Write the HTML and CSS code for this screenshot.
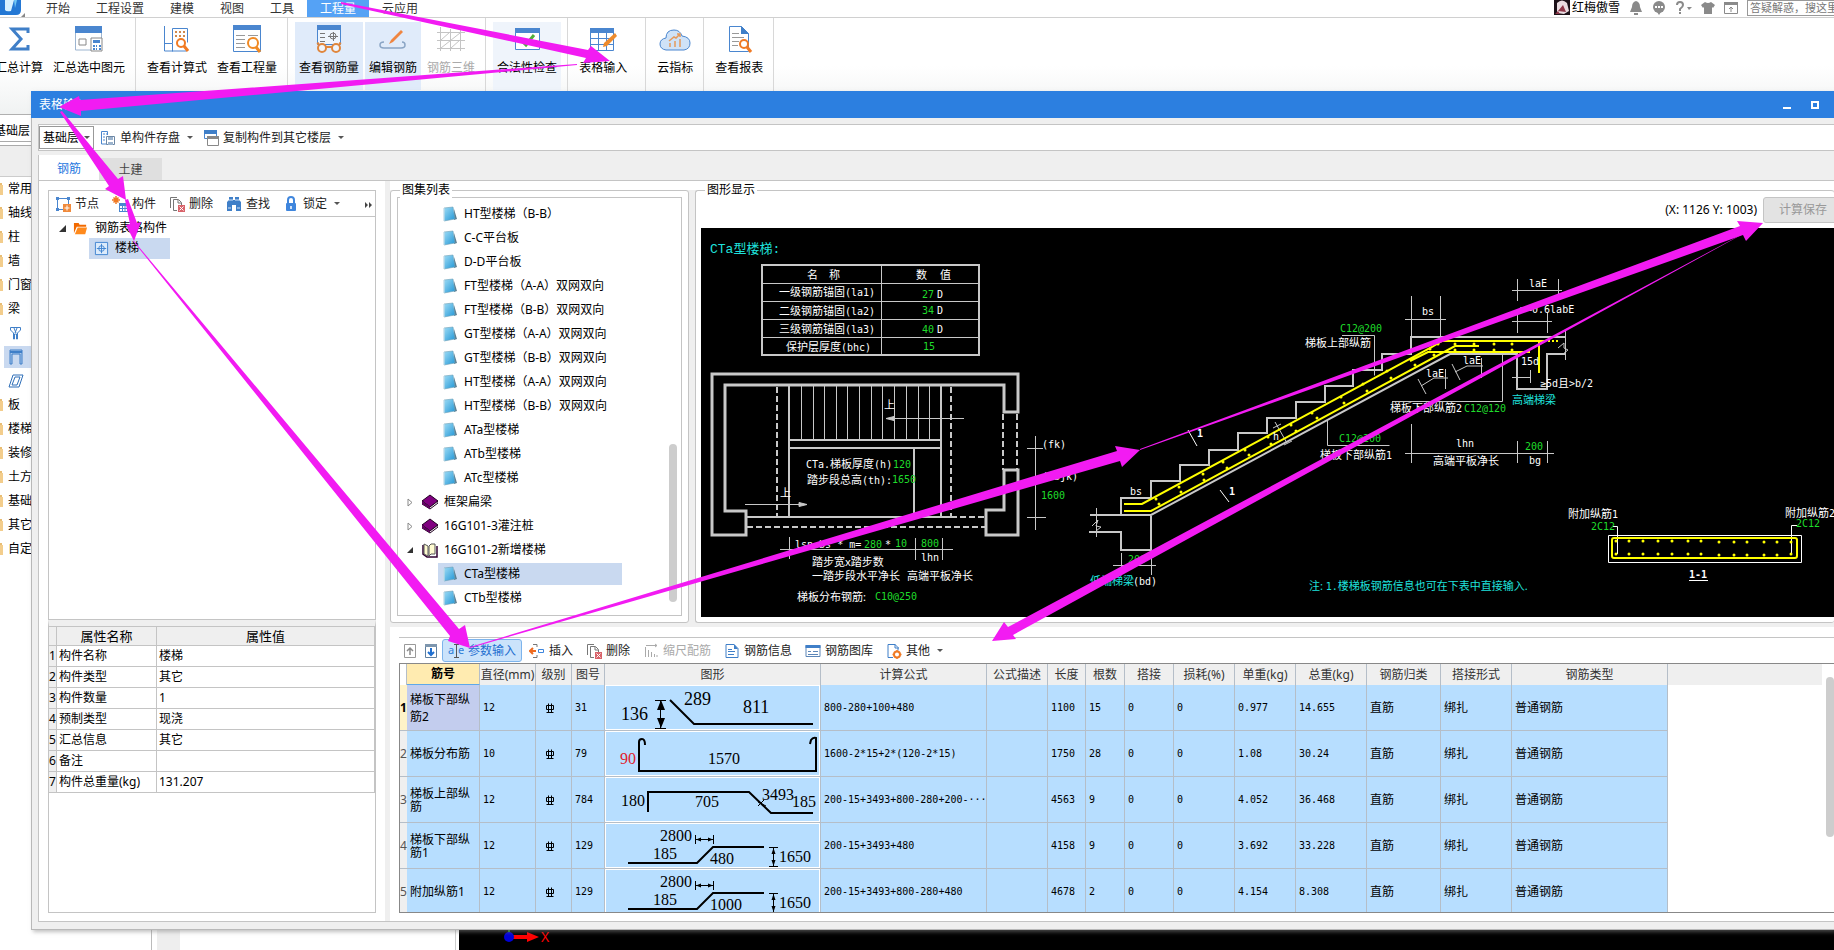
FILE: index.html
```html
<!DOCTYPE html>
<html lang="zh-CN">
<head>
  <meta charset="UTF-8" />
  <meta name="viewport" content="width=device-width, initial-scale=1.0"/>
  <title>表格输入</title>
  <link rel="stylesheet" href="styles.css">
</head>
<body>
  <!-- icon sprite -->
  <svg class="sprite" aria-hidden="true">
    <linearGradient id="pageFill" x1="0" y1="0" x2="1" y2="1"><stop offset="0" stop-color="#9fdcf5"/><stop offset="1" stop-color="#2196d6"/></linearGradient>
    <symbol id="i-page" viewBox="0 0 16 16"><path d="M12 3l3 10-3 1z" fill="#5b7f92"/><path d="M2 2l9-1 2 12-11 2z" fill="url(#pageFill)" stroke="#6f9fb5" stroke-width=".6"/><path d="M2 2v13" stroke="#d6edf7"/></symbol>
    <symbol id="i-book" viewBox="0 0 16 16"><path d="M0 7l8-6 8 6-8 6z" fill="#800080" stroke="#200020"/><path d="M0 7v3l8 5 8-6V7l-8 6z" fill="#fff" stroke="#200020"/><path d="M0 7l8 6v2l-8-5z" fill="#600060"/></symbol>
    <symbol id="i-open" viewBox="0 0 16 16"><path d="M1 3v9l4 3h10V4" fill="none" stroke="#300030" stroke-width="1.500"/><path d="M2 2l4 2v10l-4-2zM7 4l2-2h4v10H9l-2 2z" fill="#fffbd0" stroke="#555"/></symbol>
    <symbol id="i-folder" viewBox="0 0 16 16"><path d="M1 2h5l1 2h7v2H4L1 13z" fill="#f26a00"/><path d="M5 7h10l-2 7H2z" fill="#ff8a1c"/></symbol>
    <symbol id="i-comp" viewBox="0 0 16 16"><path d="M1.500 1.500h13v13h-13z" fill="#dcebfb" stroke="#3f83d0"/><path d="M8 3v10M3 8h10" stroke="#3f83d0" fill="none"/><circle cx="8" cy="8" r="3" fill="none" stroke="#3f83d0"/></symbol>
    <symbol id="i-node" viewBox="0 0 16 16"><path d="M8 13.500H2.500v-11h11V8" fill="none" stroke="#4a86cf"/><path d="M1 1h3v3H1zM12 1h3v3h-3zM1 12h3v3H1z" fill="#4a86cf"/><path d="M8 8h8v8H8z" fill="#f08a3c"/><path d="M12 9.500v5M9.500 12h5" stroke="#fff"/></symbol>
    <symbol id="i-addcomp" viewBox="0 0 16 16"><path d="M4 0v8M0 4h8M1.500 1.500l5 5M6.500 1.500l-5 5" stroke="#f07a24" stroke-width="1.500"/><path d="M7 7h9v9H7z" fill="#4a86cf"/><path d="M8 10h2v2H8zM11 10h1.500v2H11zM13.500 10H15v2h-1.500zM8 13h2v2H8zM11 13h1.500v2H11zM13.500 13H15v2h-1.500z" fill="#fff"/></symbol>
    <symbol id="i-del" viewBox="0 0 16 16"><path d="M1.500 12V1.500H8M4.500 14.500v-11h5l3 3v3M4.500 14.500H8M9 4v3h3" fill="none" stroke="#777"/><path d="M9 9h7v7H9z" fill="#d9636a"/><path d="M10.500 10.500l4 4M14.500 10.500l-4 4" stroke="#fff"/></symbol>
    <symbol id="i-find" viewBox="0 0 16 16"><path d="M3 1h4v3h2V1h4v3l2 2v9h-5V9H6v6H1V6l2-2z" fill="#3f7fc8"/><path d="M3 4h4M9 4h4M2 12h3M11 12h3" stroke="#d7e6f7"/></symbol>
    <symbol id="i-lock" viewBox="0 0 16 16"><path d="M5 8V4a3 3 0 0 1 6 0v4" fill="none" stroke="#3f86dd" stroke-width="2"/><rect x="3" y="7" width="10" height="8" rx="1" fill="#3f86dd"/><path d="M8 10v3" stroke="#fff" stroke-width="1.500"/></symbol>
    <symbol id="i-save" viewBox="0 0 16 16"><path d="M7 14H1.500V1.500h6V5" fill="none" stroke="#4a86cf"/><path d="M3 4h2M3 7h2M3 10h2M6 4h1" stroke="#4a86cf"/><path d="M6.500 6.500h8v8h-8z" fill="#fff" stroke="#6c87a5"/><path d="M8 7h5v3H8zM8 12h5v3H8z" fill="#9bb3cd"/></symbol>
    <symbol id="i-copy" viewBox="0 0 16 16"><path d="M1.500 .500h12v8h-12z" fill="#fff" stroke="#4a86cf"/><path d="M1 0h13v4H1z" fill="#3f7fc8"/><path d="M4.500 6.500h11v9h-11z" fill="#fff" stroke="#888"/><path d="M4 6h12v3H4z" fill="#888"/></symbol>
    <symbol id="i-up" viewBox="0 0 16 16"><path d="M2.500 1.500h11v13h-11z" fill="none" stroke="#999"/><path d="M8 12V5M5 8l3-3 3 3" fill="none" stroke="#8a8a8a" stroke-width="1.500"/></symbol>
    <symbol id="i-down" viewBox="0 0 16 16"><path d="M2.500 1.500h11v13h-11z" fill="none" stroke="#5f7f9f"/><path d="M2 1h12v3H2z" fill="#7d96ae"/><path d="M8 5v7M5 9l3 3 3-3" fill="none" stroke="#1f6fd0" stroke-width="2"/></symbol>
    <symbol id="i-ins" viewBox="0 0 16 16"><path d="M4 1.500h4V4M4 14.500h4V12" fill="none" stroke="#777"/><path d="M7 8H2M4 5L1 8l3 3" fill="none" stroke="#ee6a1f" stroke-width="2"/><path d="M9.500 6.500h5v3h-5z" fill="none" stroke="#3f86dd"/></symbol>
    <symbol id="i-scale" viewBox="0 0 16 16"><path d="M2.500 4v10M5.500 7v7M8.500 9v5M11.500 11v3M14 12v2M3 2.500h11M12 1l2 1.500L12 4" stroke="#aaa" fill="none"/></symbol>
    <symbol id="i-info" viewBox="0 0 16 16"><path d="M2 1.500h8l4 4v9H2z" fill="#fff" stroke="#3f7fc8"/><path d="M10 1v5h4z" fill="#3f7fc8"/><path d="M4 6.500h4M4 8.500h7M4 11.500h6" stroke="#3f7fc8"/></symbol>
    <symbol id="i-lib" viewBox="0 0 16 16"><path d="M1 2.500h14v11H1z" fill="#fff" stroke="#5c86b8"/><path d="M.500 2h15v3H.500z" fill="#3f7fc8"/><path d="M3 8.500h3M3 11.500h10M8 8.500h5" stroke="#5c86b8"/></symbol>
    <symbol id="i-other" viewBox="0 0 16 16"><path d="M7 14.500H2v-13h7l3 3v3M9 1v4h4" fill="#fff" stroke="#3f7fc8"/><circle cx="11" cy="11.500" r="3" fill="#fff" stroke="#f07a24" stroke-width="2"/><path d="M11 7v2M11 14v2M6.500 11.500h2M13.500 11.500h2" stroke="#f07a24" stroke-width="1.500"/></symbol>
    <symbol id="i-rebar" viewBox="0 0 10 12"><path d="M1.500 3.500h7v4h-7zM3.500 1.500v9M6.500 1.500v9M1.500 10.500h7" fill="none" stroke="#000"/></symbol>
    <symbol id="i-nav" viewBox="0 0 4 14"><path d="M0 1h2v12H0z" fill="#e8bd73"/><path d="M0 3h3v10H0z" fill="#f3cd8c"/></symbol>
  </svg>

  <div class="app">
    <header class="menubar">
      <div class="logo">
        <svg width="21" height="15" viewBox="0 0 21 15"><path d="M0 0h21v10q0 5-5 5H0z" fill="#2478d4"/><path d="M5 0h9l-3 11q-5 1-6-1z" fill="#d8f1ff"/><path d="M14 0h3l-2 8z" fill="#6fc6f5"/></svg>
        <svg width="4" height="4" viewBox="0 0 4 4"><path d="M4 0v4H0z" fill="#888"/></svg>
      </div>
      <nav class="menus">
        <a href="#">开始</a><a href="#">工程设置</a><a href="#">建模</a><a href="#">视图</a><a href="#">工具</a><a href="#" class="active">工程量</a><a href="#">云应用</a>
      </nav>
      <div class="account">
        <svg class="avatar" width="16" height="15" viewBox="0 0 16 15"><path d="M0 0h16v15H0z" fill="#1c1118"/><path d="M3 3q5-5 10 0l2 8-5 3-7-1z" fill="#e9dbe0"/><path d="M4 11l5-6 3 7zM1 14l3-3 2 3z" fill="#8e3648"/></svg>
        <span>红梅傲雪</span>
        <svg width="14" height="14" viewBox="0 0 14 14"><path d="M7 0q4 1 4 6l2 5H1l2-5q0-5 4-6zM5 12h4v2H5z" fill="#8a8a8a"/></svg>
        <svg width="14" height="14" viewBox="0 0 14 14"><circle cx="7" cy="6" r="6" fill="#8a8a8a"/><path d="M5 11l2 3 2-3z" fill="#8a8a8a"/><path d="M3 6h2M6 6h2M9 6h2" stroke="#fff" stroke-width="2"/></svg>
        <svg width="17" height="14" viewBox="0 0 17 14"><path d="M2 4q0-3 3-3t3 3q0 2-3 4v2M5 11v2" fill="none" stroke="#8a8a8a" stroke-width="2"/><path d="M12 6h5l-3 3z" fill="#8a8a8a"/></svg>
        <svg width="14" height="14" viewBox="0 0 14 14"><path d="M4 1q3 2 6 0l4 3-2 3-1-1v7H3V6L2 7 0 4z" fill="#8a8a8a"/></svg>
        <svg width="14" height="14" viewBox="0 0 14 14"><path d="M.500 1.500h13v11H.500z" fill="none" stroke="#8a8a8a"/><path d="M0 1h14v3H0z" fill="#8a8a8a"/><path d="M7 11V6M5 8l2-2 2 2" fill="none" stroke="#8a8a8a"/></svg>
        <input type="text" class="search" aria-label="搜索" placeholder="答疑解惑，搜这里">
      </div>
    </header>

    <div class="ribbon">
      <div class="group first">
        <button class="tool"><svg width="30" height="30" viewBox="0 0 30 30"><path d="M24 9V5H8l9 10-9 10h16v-4" fill="none" stroke="#3f7fc8" stroke-width="3"/></svg>汇总计算</button>
        <button class="tool"><svg width="30" height="30" viewBox="0 0 30 30"><path d="M1.500 3h26v23h-26z" fill="#fff" stroke="#9db5d0"/><path d="M1 2h27v7H1z" fill="#4a86cf"/><path d="M5 15h7v6H5z" fill="none" stroke="#888"/><path d="M17 14h11v13H17z" fill="#fff" stroke="#888"/><path d="M19 16h7v3h-7zM19 21h2v2h-2zM22 21h1v2h-1zM25 21h2v2h-2zM19 24h2v2h-2zM22 24h1v2h-1zM25 24h2v2h-2z" fill="#4a86cf"/></svg>汇总选中图元</button>
      </div>
      <div class="group">
        <button class="tool"><svg width="30" height="30" viewBox="0 0 30 30"><path d="M2.500 2v25h22M2.500 19.500h8v8M10.500 19V4.500h15v14" fill="none" stroke="#4a86cf"/><path d="M13 7h2v2h-2zM17 7h2v2h-2zM21 7h2v2h-2zM13 11h2v2h-2zM17 11h2v2h-2zM21 11h2v2h-2z" fill="#d0894d"/><circle cx="19" cy="19" r="4" fill="#fff" stroke="#f07a24" stroke-width="2"/><path d="M22 22l4 5" stroke="#f07a24" stroke-width="3"/></svg>查看计算式</button>
        <button class="tool"><svg width="30" height="30" viewBox="0 0 30 30"><path d="M1.500 1.500h27v26h-27z" fill="#fff" stroke="#4a86cf"/><path d="M1 1h28v5H1z" fill="#4a86cf"/><path d="M4 11.500h9M4 15.500h9M4 19.500h9M4 23.500h9M16 11.500h10M16 15.500h4" stroke="#999"/><circle cx="21" cy="19" r="5" fill="#fff" stroke="#f08a24" stroke-width="2"/><path d="M24 23l4 5" stroke="#f08a24" stroke-width="3"/></svg>查看工程量</button>
      </div>
      <div class="group">
        <button class="tool on"><svg width="30" height="30" viewBox="0 0 30 30"><path d="M3.500 1.500h23v19h-23z" fill="#eef5fd" stroke="#4a86cf"/><path d="M3 1h24v5H3z" fill="#4a86cf"/><path d="M6 9.500h5M6 13.500h5M6 17.500h5M14 12.500h10M19.500 8v9" stroke="#777"/><circle cx="19" cy="12" r="3" fill="none" stroke="#777"/><circle cx="8" cy="24" r="4" fill="#eef5fd" stroke="#e0863c" stroke-width="2"/><circle cx="22" cy="24" r="4" fill="#eef5fd" stroke="#e0863c" stroke-width="2"/><path d="M12 23h6M3 20l2-1M27 20l-2-1" stroke="#e0863c" stroke-width="2"/></svg>查看钢筋量</button>
        <button class="tool on"><svg width="30" height="30" viewBox="0 0 30 30"><path d="M6 18q-4 0-4 3t4 3h17q4 0 4-3t-3-3" fill="none" stroke="#8aa5c5" stroke-width="1.500"/><path d="M11 20l2-4L23 6l2 2-10 10z" fill="#ef8540"/></svg>编辑钢筋</button>
        <button class="tool" disabled><svg width="30" height="30" viewBox="0 0 30 30"><path d="M4.500 3v24M14.500 5v22M24.500 3v24M1 8.500h28M1 16.500h28M1 24.500h28M5 24L24 9M5 16l9-8M15 24l9-8" fill="none" stroke="#c4c4c4"/></svg>钢筋三维</button>
      </div>
      <div class="group">
        <button class="tool soft"><svg width="30" height="30" viewBox="0 0 30 30"><path d="M3.500 4.500h24v21h-24z" fill="#fff" stroke="#4a86cf"/><path d="M3 4h25v5H3z" fill="#4a86cf"/><path d="M10 17l4 4 8-10" fill="none" stroke="#4fae3c" stroke-width="3"/></svg>合法性检查</button>
      </div>
      <div class="group wide">
        <button class="tool"><svg width="30" height="30" viewBox="0 0 30 30"><path d="M2.500 4.500h23v22h-23zM10.500 8v18M18.500 8v18M2 14.500h23M2 20.500h23" fill="#fff" stroke="#4a86cf"/><path d="M2 4h24v5H2z" fill="#4a86cf"/><path d="M15 23l1-4L27 9l2 3-10 10z" fill="#ee8b2c"/></svg>表格输入</button>
      </div>
      <div class="group">
        <button class="tool"><svg width="32" height="30" viewBox="0 0 32 30"><path d="M7 26q-6-1-6-6 0-5 6-6 0-8 8-8 6 0 8 6 8 1 8 7 0 6-6 7z" fill="#cfe2f7" stroke="#4a86cf"/><path d="M11 23v-4M16 23v-6M21 23v-8M10 17l5-4 2 1 4-4M18 10h3v3" fill="none" stroke="#e59a5c" stroke-width="1.500"/></svg>云指标</button>
      </div>
      <div class="group">
        <button class="tool"><svg width="30" height="30" viewBox="0 0 30 30"><path d="M5.500 2.500h12l7 7v18h-19z" fill="#fff" stroke="#4a86cf"/><path d="M17 2v8h8z" fill="#3f7fc8"/><path d="M8 9.500h7M8 13.500h12M8 17.500h7M8 21.500h6" stroke="#999"/><circle cx="20" cy="20" r="4" fill="#fff" stroke="#f07a24" stroke-width="2"/><path d="M23 23l4 5" stroke="#f07a24" stroke-width="3"/></svg>查看报表</button>
      </div>
    </div>

    <div class="workspace">
      <aside class="modules">
        <div class="floor">基础层</div>
        <div class="modhead"></div>
        <ul>
          <li><svg width="4" height="14"><use href="#i-nav"/></svg>常用类型</li>
          <li><svg width="4" height="14"><use href="#i-nav"/></svg>轴线</li>
          <li><svg width="4" height="14"><use href="#i-nav"/></svg>柱</li>
          <li><svg width="4" height="14"><use href="#i-nav"/></svg>墙</li>
          <li><svg width="4" height="14"><use href="#i-nav"/></svg>门窗洞</li>
          <li><svg width="4" height="14"><use href="#i-nav"/></svg>梁</li>
          <li class="sub"><svg width="16" height="16" viewBox="0 0 16 16"><path d="M2.500 2.500h10V5L9.500 8v6h-1V9h-2v5h-1V8l-3-3zM6 3l2 5M9 3l-2 5" fill="none" stroke="#3f7fc8"/></svg></li>
          <li class="sub sel"><svg width="16" height="16" viewBox="0 0 16 16"><path d="M2 1h12v14h-2V5H4v10H2z" fill="#a9c7ea" stroke="#3f7fc8"/><path d="M2 2h12v2H2z" fill="#3f7fc8"/></svg></li>
          <li class="sub"><svg width="16" height="16" viewBox="0 0 16 16"><path d="M5 2h10l-4 12H1zM7 4h5L9 12H4z" fill="none" stroke="#2f6fb8"/></svg></li>
          <li><svg width="4" height="14"><use href="#i-nav"/></svg>板</li>
          <li><svg width="4" height="14"><use href="#i-nav"/></svg>楼梯</li>
          <li><svg width="4" height="14"><use href="#i-nav"/></svg>装修</li>
          <li><svg width="4" height="14"><use href="#i-nav"/></svg>土方</li>
          <li><svg width="4" height="14"><use href="#i-nav"/></svg>基础</li>
          <li><svg width="4" height="14"><use href="#i-nav"/></svg>其它</li>
          <li><svg width="4" height="14"><use href="#i-nav"/></svg>自定义</li>
        </ul>
      </aside>
      <div class="rail"></div>
      <div class="props-back"></div>
      <div class="model">
        <svg width="100" height="20" viewBox="0 0 100 20"><path d="M50 0v4" stroke="#1c7a1c" stroke-width="2"/><path d="M52 7h18" stroke="#f00" stroke-width="4"/><path d="M68 2l12 5-12 5z" fill="#f00"/><circle cx="50" cy="7" r="5" fill="#0000d8"/><text x="82" y="12" class="axis">X</text></svg>
      </div>
    </div>
  </div>

  <section class="dialog">
    <div class="titlebar">
      <h1>表格输入</h1>
      <button aria-label="最小化"><svg width="8" height="8"><path d="M0 6h8v2H0z" fill="#fff"/></svg></button>
      <button aria-label="最大化"><svg width="8" height="8"><path d="M1 1h6v6H1zM0 1h8" fill="none" stroke="#fff" stroke-width="2"/></svg></button>
    </div>
    <div class="frame">
      <div class="topbar">
        <span class="floorpick"><select aria-label="楼层"><option>基础层</option></select></span>
        <button class="btn"><svg><use href="#i-save"/></svg>单构件存盘<i class="caret"></i></button>
        <button class="btn"><svg><use href="#i-copy"/></svg>复制构件到其它楼层<i class="caret"></i></button>
      </div>
      <div class="tabs"><button class="tab active">钢筋</button><button class="tab">土建</button></div>

      <div class="page">
        <div class="left">
          <div class="bar">
            <button class="btn"><svg><use href="#i-node"/></svg>节点</button>
            <button class="btn"><svg><use href="#i-addcomp"/></svg>构件</button>
            <button class="btn"><svg><use href="#i-del"/></svg>删除</button>
            <button class="btn"><svg><use href="#i-find"/></svg>查找</button>
            <button class="btn"><svg><use href="#i-lock"/></svg>锁定<i class="caret"></i></button>
            <button class="more" aria-label="更多"><svg width="8" height="6" viewBox="0 0 8 6"><path d="M0 0l3 3-3 3zM4 0l3 3-3 3z" fill="#444"/></svg></button>
          </div>
          <ul class="comptree">
            <li><svg class="arr" width="7" height="7"><path d="M7 0v7H0z" fill="#333"/></svg><svg><use href="#i-folder"/></svg>钢筋表格构件</li>
            <li class="child"><span class="sel"><svg><use href="#i-comp"/></svg>楼梯</span></li>
          </ul>
          <div class="attrs">
            <table>
              <colgroup><col class="n"><col class="k"><col></colgroup>
              <thead><tr><th></th><th>属性名称</th><th>属性值</th></tr></thead>
              <tbody>
                <tr><th>1</th><td>构件名称</td><td>楼梯</td></tr>
                <tr><th>2</th><td>构件类型</td><td>其它</td></tr>
                <tr><th>3</th><td>构件数量</td><td>1</td></tr>
                <tr><th>4</th><td>预制类型</td><td>现浇</td></tr>
                <tr><th>5</th><td>汇总信息</td><td>其它</td></tr>
                <tr><th>6</th><td>备注</td><td></td></tr>
                <tr><th>7</th><td>构件总重量(kg)</td><td>131.207</td></tr>
              </tbody>
            </table>
          </div>
        </div>

        <div class="right">
          <div class="upper">
            <div class="box atlas">
              <h2>图集列表</h2>
              <ul>
                <li class="leaf"><svg><use href="#i-page"/></svg>HT型楼梯（B-B）</li>
                <li class="leaf"><svg><use href="#i-page"/></svg>C-C平台板</li>
                <li class="leaf"><svg><use href="#i-page"/></svg>D-D平台板</li>
                <li class="leaf"><svg><use href="#i-page"/></svg>FT型楼梯（A-A）双网双向</li>
                <li class="leaf"><svg><use href="#i-page"/></svg>FT型楼梯（B-B）双网双向</li>
                <li class="leaf"><svg><use href="#i-page"/></svg>GT型楼梯（A-A）双网双向</li>
                <li class="leaf"><svg><use href="#i-page"/></svg>GT型楼梯（B-B）双网双向</li>
                <li class="leaf"><svg><use href="#i-page"/></svg>HT型楼梯（A-A）双网双向</li>
                <li class="leaf"><svg><use href="#i-page"/></svg>HT型楼梯（B-B）双网双向</li>
                <li class="leaf"><svg><use href="#i-page"/></svg>ATa型楼梯</li>
                <li class="leaf"><svg><use href="#i-page"/></svg>ATb型楼梯</li>
                <li class="leaf"><svg><use href="#i-page"/></svg>ATc型楼梯</li>
                <li><svg class="arr" width="7" height="9"><path d="M1 1l4 3.500L1 8z" fill="#fff" stroke="#888"/></svg><svg><use href="#i-book"/></svg>框架扁梁</li>
                <li><svg class="arr" width="7" height="9"><path d="M1 1l4 3.500L1 8z" fill="#fff" stroke="#888"/></svg><svg><use href="#i-book"/></svg>16G101-3灌注桩</li>
                <li><svg class="arr" width="7" height="9"><path d="M6 1v6H0z" fill="#333"/></svg><svg><use href="#i-open"/></svg>16G101-2新增楼梯</li>
                <li class="leaf sel"><svg><use href="#i-page"/></svg>CTa型楼梯</li>
                <li class="leaf"><svg><use href="#i-page"/></svg>CTb型楼梯</li>
              </ul>
              <span class="thumb"></span>
            </div>

            <div class="box drawing">
              <h2>图形显示</h2>
              <div class="coords"><span>(X: 1126 Y: 1003)</span><button disabled>计算保存</button></div>
              <svg class="cad" viewBox="701 228 1133 389" preserveAspectRatio="xMinYMin slice">
                <text class="c big" x="710" y="253">CTa型楼梯:</text>
                <!-- anchorage table -->
                <g class="ln">
                  <path class="w2" d="M762 265h217v90H762z"/>
                  <path d="M881.500 265v90M762 283.500h217M762 301.500h217M762 319.500h217M762 337.500h217"/>
                </g>
                <text x="807" y="279">名</text><text x="829" y="279">称</text><text x="916" y="279">数</text><text x="940" y="279">值</text>
                <text x="779" y="296">一级钢筋锚固<tspan class="m">(la1)</tspan></text>
                <text x="779" y="315">二级钢筋锚固<tspan class="m">(la2)</tspan></text>
                <text x="779" y="333">三级钢筋锚固<tspan class="m">(la3)</tspan></text>
                <text x="786" y="351">保护层厚度<tspan class="m">(bhc)</tspan></text>
                <text class="m g" x="922" y="298">27</text><text class="m" x="937" y="298">D</text>
                <text class="m g" x="922" y="314">34</text><text class="m" x="937" y="314">D</text>
                <text class="m g" x="922" y="333">40</text><text class="m" x="937" y="333">D</text>
                <text class="m g" x="923" y="350">15</text>

                <!-- plan -->
                <g class="ln">
                  <path class="w3" d="M1018 412v-38H712v161h34v-24h-21V385h279v27zM1004 470h14v65h-32v-25h18z"/>
                  <path class="w2" d="M789 385v131M941 385v131M789 440h152M789 448h152M914 448v68M747 517h204"/>
                  <path class="w2 dash" d="M777 387v129M951 387v129M1003 414v56M1017 414v56M951 517h34M747 527h238"/>
                  <path d="M801.500 386v54M813.500 386v54M824.500 386v54M836.500 386v54M847.500 386v54M859.500 386v54M871.500 386v54M882.500 386v54M894.500 386v54M906.500 386v54M918.500 386v54M929.500 386v54"/>
                  <path d="M886 418.500h78M745 504.500h62M1035.500 436v94M1027 448.500h16M1027 517.500h19M780 549.500h173M789.500 537v22M915.500 538v22M942.500 538v22"/>
                  <path class="solid" d="M886 418.500l8-2v4zM807 504.500l-8-2v4z"/>
                </g>
                <text x="884" y="409">上</text><text x="780" y="497">上</text>
                <text x="806" y="468"><tspan class="m">CTa.</tspan>梯板厚度<tspan class="m">(h)</tspan></text><text class="m g" x="893" y="468">120</text>
                <text x="807" y="484">踏步段总高<tspan class="m">(th):</tspan></text><text class="m g" x="892" y="483">1650</text>
                <text class="m" x="1042" y="448">(fk)</text><text class="m" x="1042" y="480">(tbjk)</text><text class="m g" x="1041" y="499">1600</text>
                <text class="m" x="795" y="548">lsn=bs * m=</text><text class="m g" x="864" y="548">280</text><text class="m" x="885" y="548">*</text><text class="m g" x="895" y="547">10</text>
                <text class="m g" x="921" y="547">800</text><text class="m" x="921" y="561">lhn</text>
                <text x="812" y="566">踏步宽x踏步数</text><text x="812" y="580">一踏步段水平净长</text><text x="907" y="580">高端平板净长</text>
                <text x="797" y="601">梯板分布钢筋:</text><text class="m g" x="875" y="600">C10@250</text>

                <!-- flight section -->
                <g class="ln">
                  <path class="w2" d="M1121 515v-17h30v-17h29v-16h29v-15h29v-17h29v-15h29v-16h29v-16h28v-16h29v-16h29v-17h154M1090 515h61L1450 354h67v35h30v-35h18M1089 532h32v18h30v-35"/>
                  <path d="M1096.500 508v29M1092 526l6-6-2 6 5 1-5 4M1565.500 330v30M1558 348l6-5v5l4 2-5 4"/>
                  <path d="M1342 335.500h32.500v40M1405 319.500h41M1411.500 296v41M1440.500 296v41"/>
                  <path d="M1327.500 421v24.500h62M1418 379l8 15M1421 386l13-8h14M1445.500 369v20M1452 364l8 16M1455 372l12-6h16M1481.500 358v20"/>
                  <path d="M1392 401.500h110.500V354M1405 453.500h149M1411.500 424v39M1517.500 441v22M1547.500 441v22"/>
                  <path d="M1512 290.500h50M1517.500 279v22M1558.500 279v17M1512 321.500h40M1517.500 311v22M1547.500 312v21M1512 377.500h19M1530.500 370v13"/>
                  <path d="M1113 565.500h43M1121.500 553v17M1151.500 550v25M1275 422l12 21M1273 428l8-4M1284 445l8-4"/>
                </g>
                <path class="bar2" d="M1124 504h18L1432 347l10-6h102M1539 341v32M1124 511h27L1455 346h24M1410 361l18-9h102"/>
                <path class="bar2 fine" d="M1544 341h15"/>
                <path class="dots" d="M1156 499h0M1179 487h0M1203 474h0M1223 462h0M1245 450h0M1268 437h0M1291 425h0M1312 413h0M1341 397h0M1363 384h0M1387 371h0M1430 349h0M1438 344h0M1159 504h0M1181 492h0M1204 480h0M1227 468h0M1249 455h0M1271 444h0M1296 431h0M1317 418h0M1344 403h0M1367 391h0M1391 378h0M1415 365h0M1434 355h0M1455 344h0M1455 350h0M1474 344h0M1474 350h0M1494 344h0M1494 350h0M1512 344h0M1512 350h0"/>
                <path class="mark" d="M1188 430l9 16M1220 490l9 12"/>
                <text class="m b" x="1197" y="437">1</text><text class="m b" x="1229" y="495">1</text>
                <text class="m" x="1130" y="495">bs</text><text class="m" x="1422" y="315">bs</text><text class="m" x="1273" y="440">h</text>
                <text class="m g" x="1340" y="332">C12@200</text><text x="1305" y="347">梯板上部纵筋</text>
                <text class="m g" x="1339" y="442">C12@200</text><text x="1320" y="459">梯板下部纵筋<tspan class="m">1</tspan></text>
                <text class="m" x="1426" y="377">laE</text><text class="m" x="1463" y="364">laE</text>
                <text x="1390" y="412">梯板下部纵筋<tspan class="m">2</tspan></text><text class="m g" x="1464" y="412">C12@120</text>
                <text class="m" x="1456" y="447">lhn</text><text x="1433" y="465">高端平板净长</text><text class="m g" x="1525" y="450">200</text><text class="m" x="1529" y="464">bg</text>
                <text class="m" x="1529" y="287">laE</text><text class="m" x="1520" y="313">&gt;=0.6labE</text><text class="m" x="1521" y="365">15d</text>
                <text x="1540" y="387"><tspan class="m">≥5d</tspan>且<tspan class="m">&gt;b/2</tspan></text><text class="c" x="1512" y="404">高端梯梁</text>
                <text class="m g" x="1128" y="563">200</text><text class="c" x="1090" y="585">低端梯梁</text><text class="m" x="1133" y="585">(bd)</text>
                <text class="c" x="1309" y="590">注: <tspan class="m">1.</tspan>楼梯板钢筋信息也可在下表中直接输入.</text>

                <!-- 1-1 -->
                <path class="mark" d="M1608.500 535.500h193v27h-193zM1613 526.500h4.500V554M1797 525.500h-5.500V554M1689 580.500h19"/>
                <rect class="bar2" x="1612" y="538" width="185" height="20" rx="2"/>
                <path class="dots" d="M1616 541h0M1629 541h0M1643 541h0M1658 541h0M1672 541h0M1688 541h0M1701 541h0M1719 542h0M1734 542h0M1747 542h0M1764 542h0M1777 542h0M1791 542h0M1616 554h0M1629 554h0M1643 554h0M1658 554h0M1672 554h0M1688 554h0M1701 554h0M1719 555h0M1734 555h0M1747 555h0M1764 555h0M1777 555h0M1791 554h0"/>
                <text x="1568" y="518">附加纵筋<tspan class="m">1</tspan></text><text class="m g" x="1591" y="530">2C12</text>
                <text x="1785" y="517">附加纵筋<tspan class="m">2</tspan></text><text class="m g" x="1796" y="527">2C12</text>
                <text class="m b" x="1689" y="578">1-1</text>
              </svg>
            </div>
          </div>

          <div class="lower">
            <div class="bar">
              <button class="btn mini" aria-label="上移"><svg><use href="#i-up"/></svg></button>
              <button class="btn mini" aria-label="下移"><svg><use href="#i-down"/></svg></button>
              <button class="btn on"><svg viewBox="0 0 16 16"><path d="M8.500 2v12M6 1.500h5M6 14.500h5" stroke="#555" fill="none"/><text x="0" y="11">a</text><text x="10" y="11">e</text></svg>参数输入</button>
              <button class="btn"><svg><use href="#i-ins"/></svg>插入</button>
              <button class="btn"><svg><use href="#i-del"/></svg>删除</button>
              <button class="btn" disabled><svg><use href="#i-scale"/></svg>缩尺配筋</button>
              <button class="btn"><svg><use href="#i-info"/></svg>钢筋信息</button>
              <button class="btn"><svg><use href="#i-lib"/></svg>钢筋图库</button>
              <button class="btn"><svg><use href="#i-other"/></svg>其他<i class="caret"></i></button>
            </div>
            <div class="gridwrap">
              <table class="rebars">
                <colgroup><col class="c7"><col class="c73"><col class="c56"><col class="c36"><col class="c33"><col class="c216"><col class="c166"><col class="c61"><col class="c38"><col class="c39"><col class="c49"><col class="c61"><col class="c61"><col class="c71"><col class="c74"><col class="c71"><col class="c156"><col></colgroup>
                <thead>
                  <tr><th class="corner"></th><th class="cur">筋号</th><th>直径(mm)</th><th>级别</th><th>图号</th><th>图形</th><th>计算公式</th><th>公式描述</th><th>长度</th><th>根数</th><th>搭接</th><th>损耗(%)</th><th>单重(kg)</th><th>总重(kg)</th><th>钢筋归类</th><th>搭接形式</th><th>钢筋类型</th><th class="rest"></th></tr>
                </thead>
                <tbody>
                  <tr>
                    <th class="cur">1</th><td class="name cur">梯板下部纵筋2</td><td class="num">12</td><td class="lv"><svg width="10" height="12"><use href="#i-rebar"/></svg></td><td class="num">31</td>
                    <td class="fig"><svg viewBox="0 0 213 43"><path d="M64 14l24 24h119"/><path class="thin" d="M49 14.500h11M49 42.500h11M54.500 14v28"/><path class="tip" d="M55 14l4 10h-8zM55 42l4-10h-8z"/><text x="15" y="34">136</text><text x="78" y="19">289</text><text x="137" y="27">811</text></svg></td>
                    <td class="num">800-280+100+480</td><td></td><td class="num">1100</td><td class="num">15</td><td class="num">0</td><td class="num">0</td><td class="num">0.977</td><td class="num">14.655</td><td>直筋</td><td>绑扎</td><td>普通钢筋</td><td class="rest"></td>
                  </tr>
                  <tr>
                    <th>2</th><td class="name">梯板分布筋</td><td class="num">10</td><td class="lv"><svg width="10" height="12"><use href="#i-rebar"/></svg></td><td class="num">79</td>
                    <td class="fig"><svg viewBox="0 0 213 43"><path d="M39 13q0-6-3-6t-3 3v29h177V6q-3-1-5 2l-1 4"/><text class="s red" x="14" y="32">90</text><text class="s" x="102" y="32">1570</text></svg></td>
                    <td class="num">1600-2*15+2*(120-2*15)</td><td></td><td class="num">1750</td><td class="num">28</td><td class="num">0</td><td class="num">0</td><td class="num">1.08</td><td class="num">30.24</td><td>直筋</td><td>绑扎</td><td>普通钢筋</td><td class="rest"></td>
                  </tr>
                  <tr>
                    <th>3</th><td class="name">梯板上部纵筋</td><td class="num">12</td><td class="lv"><svg width="10" height="12"><use href="#i-rebar"/></svg></td><td class="num">784</td>
                    <td class="fig"><svg viewBox="0 0 213 43"><path d="M42 34V14h101l22 21h42"/><path class="thin" d="M152 28l6-6M152 24l8 4"/><text class="s" x="15" y="28">180</text><text class="s" x="89" y="29">705</text><text class="s" x="156" y="22">3493</text><text class="s" x="186" y="29">185</text></svg></td>
                    <td class="num">200-15+3493+800-280+200-···</td><td></td><td class="num">4563</td><td class="num">9</td><td class="num">0</td><td class="num">0</td><td class="num">4.052</td><td class="num">36.468</td><td>直筋</td><td>绑扎</td><td>普通钢筋</td><td class="rest"></td>
                  </tr>
                  <tr>
                    <th>4</th><td class="name">梯板下部纵筋1</td><td class="num">12</td><td class="lv"><svg width="10" height="12"><use href="#i-rebar"/></svg></td><td class="num">129</td>
                    <td class="fig"><svg viewBox="0 0 213 43"><path d="M22 39h69l16-16h51"/><path class="thin" d="M89.500 11v9M107.500 11v9M90 15.500h17M163 23.500h9M163 42.500h9M167.500 23v20"/><path class="tip" d="M90 15.500l5-2v4zM107 15.500l-5-2v4zM167.500 24l2 6h-4zM167.500 42l2-6h-4z"/><text class="s" x="54" y="17">2800</text><text class="s" x="47" y="35">185</text><text class="s" x="104" y="40">480</text><text class="s" x="173" y="38">1650</text></svg></td>
                    <td class="num">200-15+3493+480</td><td></td><td class="num">4158</td><td class="num">9</td><td class="num">0</td><td class="num">0</td><td class="num">3.692</td><td class="num">33.228</td><td>直筋</td><td>绑扎</td><td>普通钢筋</td><td class="rest"></td>
                  </tr>
                  <tr>
                    <th>5</th><td class="name">附加纵筋1</td><td class="num">12</td><td class="lv"><svg width="10" height="12"><use href="#i-rebar"/></svg></td><td class="num">129</td>
                    <td class="fig"><svg viewBox="0 0 213 43"><path d="M22 39h69l16-16h51"/><path class="thin" d="M89.500 11v9M107.500 11v9M90 15.500h17M163 23.500h9M163 42.500h9M167.500 23v20"/><path class="tip" d="M90 15.500l5-2v4zM107 15.500l-5-2v4zM167.500 24l2 6h-4zM167.500 42l2-6h-4z"/><text class="s" x="54" y="17">2800</text><text class="s" x="47" y="35">185</text><text class="s" x="104" y="40">1000</text><text class="s" x="173" y="38">1650</text></svg></td>
                    <td class="num">200-15+3493+800-280+480</td><td></td><td class="num">4678</td><td class="num">2</td><td class="num">0</td><td class="num">0</td><td class="num">4.154</td><td class="num">8.308</td><td>直筋</td><td>绑扎</td><td>普通钢筋</td><td class="rest"></td>
                  </tr>
                </tbody>
              </table>
              <span class="thumb"></span>
            </div>
          </div>
        </div>
      </div>
    </div>
  </section>

  <!-- step arrows drawn over everything -->
  <svg class="arrows" viewBox="0 0 1834 950" preserveAspectRatio="xMinYMin slice" aria-hidden="true">
    <path d="M341 2L588 50l3-4 19 15-27 2 3-5L341 4z"/>
    <path d="M577 64L80 100l-1-4-20 11 22 9v-5L577 65z"/>
    <path d="M62 111L118 179l5-3 3 24-21-11 4-3L60 112z"/>
    <path d="M125 200l3-1 9 24 4-1-7 19-8-16 4-1z"/>
    <path d="M134 241L459 629l6-4 5 23-22-7 2-5L133 241z"/>
    <path d="M470 647L1117 451l-2-5 25 4-18 17-2-6L470 648z"/>
    <path d="M1140 449L1740 226l-3-5 26 2-17 18-3-6L1140 450z"/>
    <path d="M1763 223L1008 627l-4-5-12 19 24-2-3-4z"/>
  </svg>
</body>
</html>
```
FILE: styles.css
```css
* { box-sizing: border-box; }
html, body { height: 100%; }
body {
  margin: 0;
  position: relative;
  overflow: hidden;
  background: #fff;
  color: #000;
  font: 12px/16px "Noto Sans", "Noto Sans CJK SC", sans-serif;
}
button, input, select { font: inherit; color: inherit; }
button { background: none; border: none; padding: 0; white-space: nowrap; }
ul { list-style: none; margin: 0; padding: 0; }
h1, h2 { margin: 0; font-size: 12px; font-weight: normal; }
svg { flex: none; }
.sprite { position: absolute; width: 0; height: 0; }

/* main window */
.app { height: 100%; display: flex; flex-direction: column; }
.menubar {
  display: flex;
  height: 18px;
  border-bottom: 1px solid #d0d0d0;
}
.logo { width: 33px; display: flex; align-items: flex-end; }
.logo svg:first-child { align-self: flex-start; }
.menus { display: flex; }
.menus a {
  padding: 0 13px;
  color: #333;
  text-decoration: none;
  line-height: 17px;
}
.menus a.active { background: #55a2f5; color: #fff; }
.account {
  margin-left: auto;
  margin-right: -13px;
  display: flex;
  gap: 9px;
  align-items: center;
  height: 15px;
}
.account .avatar { margin-right: -7px; }
.search {
  width: 100px;
  height: 16px;
  padding: 0 2px;
  border: 1px solid #999;
  font-size: 11px;
}
.search::placeholder { color: #777; }

.ribbon {
  display: flex;
  height: 97px;
  background: linear-gradient(#fff 50%, #f0f2f2);
  border-bottom: 1px solid #b0b0b0;
}
.group {
  display: flex;
  gap: 2px;
  padding: 4px 6px 24px 7px;
  border-right: 1px solid #d8d8d8;
}
.group.first { margin-left: -9px; padding-left: 0; }
.group.wide { padding-right: 14px; }
.tool {
  display: flex;
  flex-direction: column;
  align-items: center;
  gap: 6px;
  padding: 2px 4px;
}
.tool.on { background: #e0ebfa; }
.tool.soft { background: #eff4fb; }
.tool:disabled { color: #aaa; }

.workspace { flex: 1; display: flex; min-height: 0; }
.modules { width: 152px; border-right: 1px solid #bbb; }
.floor {
  height: 27px;
  margin-left: -8px;
  padding: 8px 0 0 2px;
  border-bottom: 1px solid #aaa;
}
.modhead { height: 32px; margin-top: 3px; background: #eee; border-top: 1px solid #aaa; border-bottom: 1px solid #ccc; }
.modules li { display: flex; align-items: center; gap: 4px; height: 24px; }
.modules .sub { padding-left: 8px; }
.modules .sel { background: #c9d9f0; height: 22px; margin: 1px 0 1px 4px; padding-left: 4px; }
.rail { width: 28px; background: #eee; border-left: 5px solid #fff; }
.props-back { width: 276px; border-right: 1px solid #ccc; }
.model { flex: 1; margin-left: 3px; background: #000; display: flex; align-items: flex-end; }
.axis { fill: #f00; font-size: 14px; }

/* table input dialog */
.dialog {
  position: absolute;
  top: 91px;
  left: 31px;
  right: 0;
  bottom: 20px;
  display: flex;
  flex-direction: column;
  box-shadow: 2px 2px 4px #8888;
}
.titlebar {
  height: 27px;
  display: flex;
  align-items: center;
  gap: 20px;
  padding: 0 15px 0 8px;
  background: #2c7fe0;
  color: #fff;
}
.titlebar h1 { flex: 1; }
.titlebar svg { display: block; }
.frame {
  flex: 1;
  min-height: 0;
  display: flex;
  flex-direction: column;
  padding: 6px 0 7px 6px;
  background: #efefef;
  border: 1px solid #b8b8b8;
  border-width: 0 0 1px 1px;
}
.topbar {
  display: flex;
  height: 27px;
  align-items: center;
  background: #fff;
  border: 1px solid #c4c4c4;
  border-width: 1px 0 1px 1px;
}
.floorpick { position: relative; }
.floorpick select {
  appearance: none;
  width: 55px;
  height: 23px;
  padding: 0 3px;
  border: 1px solid #999;
  background: #fff;
  border-radius: 0;
  display: block;
}
.floorpick::after, .caret {
  content: "";
  border: 3px solid transparent;
  border-top-color: #555;
  border-bottom: none;
}
.floorpick::after { position: absolute; right: 4px; top: 10px; }
.caret { margin: 0 -2px 0 3px; }
.btn {
  display: flex;
  align-items: center;
  gap: 4px;
  height: 23px;
  padding: 0 5px;
  border: 1px solid transparent;
  border-radius: 3px;
  color: #222;
}
.btn svg { width: 16px; height: 16px; }
.btn.mini { padding: 0 1px; }
.btn.on { background: #cbe3fb; border-color: #7db4ec; color: #1f6fd0; }
.btn text { font-size: 11px; fill: #2f7fd8; }
.btn:disabled { color: #aaa; }
.tabs { display: flex; align-items: flex-end; height: 29px; padding-top: 4px; }
.tab { width: 63px; height: 22px; padding-top: 2px; background: #dfdfdf; color: #444; }
.tab.active { width: 61px; height: 26px; margin-bottom: -1px; background: #fff; color: #1f78e0; border-left: 1px solid #c4c4c4; }

.page { flex: 1; min-height: 0; display: flex; gap: 5px; border: 1px solid #c4c4c4; border-right: none; }
.left {
  width: 346px;
  padding: 9px 9px 8px;
  background: #fff;
  display: flex;
  flex-direction: column;
}
.left .bar { border: 1px solid #c4c4c4; height: 27px; }
.bar { display: flex; gap: 1px; align-items: center; }
.more { margin-left: auto; padding-right: 2px; }
.comptree { flex: 1; border: 1px solid #c4c4c4; border-top: none; padding: 1px 0 0 10px; }
.comptree li { display: flex; align-items: center; height: 20px; gap: 7px; }
.comptree li svg { width: 15px; height: 15px; }
.comptree li .arr { width: 7px; height: 7px; }
.comptree .child { padding-left: 30px; }
.comptree .sel {
  display: flex;
  align-items: center;
  gap: 6px;
  width: 81px;
  height: 21px;
  padding-left: 5px;
  background: #c9d9f0;
}
.attrs { height: 293px; border: 1px solid #c4c4c4; border-top: 6px solid #efefef; }
table { border-collapse: separate; border-spacing: 0; table-layout: fixed; }
th { font-weight: normal; padding: 0; }
.attrs table { width: 100%; border-top: 1px solid #c4c4c4; }
.attrs .n { width: 8px; }
.attrs .k { width: 100px; }
.attrs th, .attrs td { border-right: 1px solid #c4c4c4; border-bottom: 1px solid #c4c4c4; height: 21px; }
.attrs td { padding: 0 2px; }
.attrs th { background: #efefef; }
.attrs thead th { height: 19px; font-size: 13px; }

.right { flex: 1; min-width: 0; display: flex; flex-direction: column; gap: 4px; }
.upper { display: flex; gap: 6px; padding-top: 9px; background: linear-gradient(#fff 9px, #efefef 9px); }
.box { position: relative; background: #fff; border: 1px solid #c4c4c4; border-radius: 3px; }
.box h2 { position: absolute; top: -10px; left: 9px; padding: 0 2px; line-height: 18px; background: #fff; }
.atlas { width: 299px; padding: 6px; }
.atlas ul { height: 419px; border: 1px solid #c4c4c4; padding: 5px 0 0 9px; }
.atlas li { display: flex; align-items: center; gap: 6px; height: 22px; margin-bottom: 2px; }
.atlas li svg { width: 16px; height: 16px; }
.atlas li .arr { width: 7px; height: 9px; margin-right: 2px; }
.atlas .leaf { margin-left: 31px; width: 184px; padding-left: 4px; }
.atlas .sel { background: #c9d9f0; }
.thumb { position: absolute; width: 8px; border-radius: 4px; background: #cdcdcd; }
.atlas .thumb { right: 11px; top: 253px; height: 158px; }
.drawing { flex: 1; min-width: 0; border-right: none; padding: 5px 0 5px 5px; }
.coords { display: flex; justify-content: flex-end; align-items: center; gap: 6px; height: 32px; padding-bottom: 4px; }
.coords button { width: 80px; height: 26px; margin-right: -9px; background: #e3e3e3; border: 1px solid #c4c4c4; border-radius: 3px; color: #999; }
.cad { display: block; width: 100%; height: 389px; background: #000; }
.cad text { font-size: 11px; fill: #fff; }
.cad .m { font: 10px "DejaVu Sans Mono", monospace; }
.cad .g { fill: #1fdc2b; }
.cad .c { fill: #1fe0dc; }
.cad .b { font-weight: bold; }
.cad .big { font: 13px "Liberation Mono", "Noto Sans CJK SC", monospace; }
.cad path, .cad rect { fill: none; }
.ln { stroke: #c8c8c8; }
.ln .w2 { stroke-width: 2; }
.ln .w3 { stroke-width: 3; }
.ln .dash { stroke-dasharray: 6 3; }
.cad .solid { fill: #c8c8c8; }
.bar2 { stroke: #ff0; stroke-width: 2; }
.bar2.fine { stroke-dasharray: 2 2; }
.dots { stroke: #ff0; stroke-width: 3; stroke-linecap: round; }
.mark { stroke: #fff; }

.lower { flex: 1; min-height: 0; display: flex; flex-direction: column; padding: 10px 0 8px 9px; background: #fff; }
.lower .bar { height: 26px; padding-left: 1px; border-top: 1px solid #c4c4c4; }
.gridwrap { position: relative; flex: 1; min-height: 0; overflow: hidden; border: 1px solid #888; border-right: none; }
.gridwrap .thumb { right: 0; top: 13px; height: 160px; }
.rebars { width: calc(100% - 12px); }
.rebars th, .rebars td { border-right: 1px solid #b5bec8; border-bottom: 1px solid #b5bec8; }
.rebars td { height: 46px; padding: 0 3px; background: #b7deff; }
.rebars thead th { height: 21px; background: #efefef; color: #333; border-bottom: none; white-space: nowrap; }
.rebars thead .cur { background: #ffebb0; color: #000; font-weight: bold; border-bottom: 1px solid #5fa8e8; }
.rebars thead .corner { background: #fff; }
.rebars tbody th { background: #efefef; color: #555; border-right: none; }
.rebars tbody th.cur { background: #fff3c8; color: #000; font-weight: bold; }
.rebars .num { font: 10px/16px "DejaVu Sans Mono", monospace; white-space: nowrap; }
.rebars .name { line-height: 13px; }
.rebars .name.cur { background: #c3cdee; line-height: 17px; }
.rebars .lv { padding-right: 10px; text-align: center; }
.rebars .lv svg { display: inline-block; vertical-align: middle; }
.rebars .rest, .rebars thead .rest { border: none; }
.rebars td.rest { background: #fff; }
.rebars .fig { padding: 0; }
.fig svg { display: block; width: 215px; height: 45px; border: 1px solid #fff; }
.fig path { fill: none; stroke: #000; stroke-width: 2; }
.fig .thin { stroke-width: 1; }
.fig .tip { fill: #000; stroke: none; }
.fig text { font: 18px "Liberation Serif", serif; }
.fig .s { font-size: 16px; }
.fig .red { fill: #e0202c; }
.c7 { width: 7px; }
.c33 { width: 33px; }
.c36 { width: 36px; }
.c38 { width: 38px; }
.c39 { width: 39px; }
.c49 { width: 49px; }
.c56 { width: 56px; }
.c61 { width: 61px; }
.c71 { width: 71px; }
.c73 { width: 73px; }
.c74 { width: 74px; }
.c156 { width: 156px; }
.c166 { width: 166px; }
.c216 { width: 216px; }

.arrows { position: absolute; inset: 0; width: 100%; height: 100%; pointer-events: none; fill: #f21bf2; }
```
